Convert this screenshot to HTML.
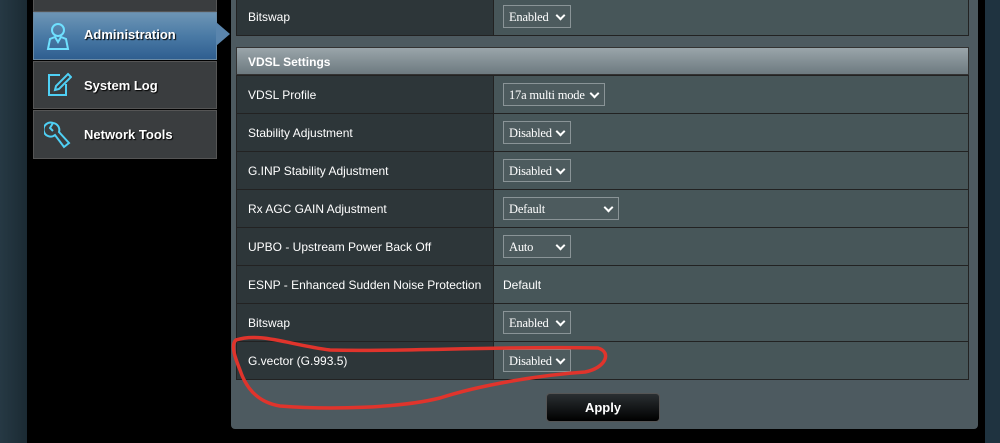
<!DOCTYPE html><html><head><style>
*{margin:0;padding:0;box-sizing:border-box}
body{width:1000px;height:443px;overflow:hidden;background:#000;font-family:"Liberation Sans",sans-serif;position:relative}
.lb{position:absolute;left:0;top:0;width:27px;height:443px;background:linear-gradient(90deg,#263944,#1b2a33)}
.rb{position:absolute;left:985px;top:0;width:15px;height:443px;background:#1f3340}
.mi{position:absolute;left:33px;width:184px;border:1px solid #555;background:#3a3d3f;color:#fff;font-weight:bold;font-size:13px}
.mi span{position:absolute;left:50px;top:16px;text-shadow:1px 1px 1px #000}
.adm{background:linear-gradient(#6d95b5,#4a7aa5 50%,#2f5e90);border-color:#6a8aa5}
.panel{position:absolute;left:231px;top:-5px;width:747px;height:434px;background:#4d5a60;border-radius:4px}
table{position:absolute;left:236px;width:733px;border-collapse:collapse;font-size:12px;color:#fff}
td{height:38px;border:1px solid #222;padding-left:11px}
td.l{width:257px;background:#2d3639}
td.v{background:#475659;padding-left:9px}
.sel{display:inline-block;position:relative;border:1px solid #8a9497;background:#4d5b5e;font-family:"Liberation Serif",serif;font-size:12.5px;color:#fff;padding:3px 5px;height:23px;line-height:16px;width:68px;vertical-align:middle;white-space:nowrap;letter-spacing:-0.2px}
.sel:after{content:"";position:absolute;right:6px;top:6px;width:5px;height:5px;border-right:2px solid #fff;border-bottom:2px solid #fff;transform:rotate(45deg)}
.hd{position:absolute;left:236px;top:47px;width:733px;height:28px;background:linear-gradient(#9aa5aa,#6d7a80);color:#fff;font-weight:bold;font-size:12px;padding:7px 11px;border:1px solid #333}
.btn{position:absolute;left:546px;top:393px;width:114px;height:29px;background:linear-gradient(#2a2f32,#000);border:1px solid #555;border-radius:4px;color:#fff;font-weight:bold;font-size:13px;text-align:center;line-height:28px}
</style></head><body>
<div class="lb"></div><div class="rb"></div>
<div class="mi" style="top:-10px;height:22px"></div>
<div class="mi adm" style="top:12px;height:48px"><span style="top:14px">Administration</span>
<svg style="position:absolute;left:12px;top:9px" width="24" height="28" viewBox="0 0 24 28" fill="none" stroke="#6fe0ff" stroke-width="2"><circle cx="12" cy="8" r="6"/><path d="M2 27 L4 17 L9 15 L12 20 L15 15 L20 17 L22 27 Z"/></svg></div>
<svg style="position:absolute;left:216px;top:22px" width="15" height="24"><path d="M0 0 L14 12 L0 24Z" fill="#5a85ad"/></svg>
<div class="mi" style="top:61px;height:48px"><span>System Log</span>
<svg style="position:absolute;left:12px;top:10px" width="26" height="26" fill="none" stroke="#4fd0f5" stroke-width="2"><path d="M14 3 H3 V23 H20 V12"/><path d="M22 2 L25 5 L13 17 L9 18 L10 14Z"/></svg></div>
<div class="mi" style="top:110px;height:49px"><span>Network Tools</span>
<svg style="position:absolute;left:10px;top:10px" width="28" height="30" viewBox="0 0 28 30" fill="none" stroke="#4fd0f5" stroke-width="2"><path d="M9 2 A7 7 0 1 0 11 14 L20 26 L25 22 L15 11 A7 7 0 0 0 9 2 M9 2 L6 7 L9 10"/></svg></div>
<div class="panel"></div>
<table style="top:-3px"><tr><td class="l">Bitswap</td><td class="v"><span class="sel">Enabled</span></td></tr></table>
<div class="hd">VDSL Settings</div>
<table style="top:75px">
<tr><td class="l">VDSL Profile</td><td class="v"><span class="sel" style="width:102px">17a multi mode</span></td></tr>
<tr><td class="l">Stability Adjustment</td><td class="v"><span class="sel">Disabled</span></td></tr>
<tr><td class="l">G.INP Stability Adjustment</td><td class="v"><span class="sel">Disabled</span></td></tr>
<tr><td class="l">Rx AGC GAIN Adjustment</td><td class="v"><span class="sel" style="width:116px">Default</span></td></tr>
<tr><td class="l">UPBO - Upstream Power Back Off</td><td class="v"><span class="sel">Auto</span></td></tr>
<tr><td class="l">ESNP - Enhanced Sudden Noise Protection</td><td class="v">Default</td></tr>
<tr><td class="l">Bitswap</td><td class="v"><span class="sel">Enabled</span></td></tr>
<tr><td class="l">G.vector (G.993.5)</td><td class="v"><span class="sel">Disabled</span></td></tr>
</table>
<div class="btn">Apply</div>
<svg style="position:absolute;left:0;top:0" width="1000" height="443"><path d="M236 340 C260 332 290 345 330 350 C400 352 500 346 598 348 C612 352 606 368 585 372 C540 375 480 385 440 398 C400 408 330 410 280 406 C255 402 245 385 240 370 C236 360 230 345 236 340" fill="none" stroke="#e0342c" stroke-width="3.5" stroke-linecap="round"/></svg>
</body></html>
